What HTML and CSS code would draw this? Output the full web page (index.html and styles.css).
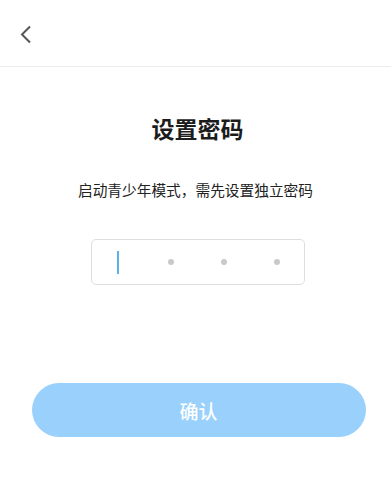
FILE: index.html
```html
<!DOCTYPE html>
<html lang="zh-CN">
<head>
<meta charset="utf-8">
<link rel="stylesheet" href="styles.css">
</head>
<body>
<div class="page">
  <header class="topbar">
    <svg class="back" width="14" height="19" viewBox="0 0 14 19"><path d="M11 1.5 L3 9.5 L11 17.5" fill="none" stroke="#555" stroke-width="2"/></svg>
  </header>
  <main class="content">
    <h1 class="title">设置密码</h1>
    <p class="subtitle">启动青少年模式，需先设置独立密码</p>
    <div class="code">
      <div class="slot"><span class="cursor"></span></div>
      <div class="slot"><span class="dot"></span></div>
      <div class="slot"><span class="dot"></span></div>
      <div class="slot"><span class="dot"></span></div>
    </div>
    <button class="confirm">确认</button>
  </main>
</div>
</body>
</html>
```
FILE: styles.css
```css
* { box-sizing: border-box; }
html, body { margin: 0; padding: 0; background: #fff; }
body { font-family: "Noto Sans CJK SC", "Noto Sans", sans-serif; color: #1a1a1a; }
.page { width: 391px; height: 493px; }
.topbar {
  height: 67px;
  border-bottom: 1px solid #ececec;
  display: flex;
  align-items: flex-start;
  padding: 25px 0 0 19px;
}
.back { display: block; }
.content {
  display: flex;
  flex-direction: column;
  align-items: center;
}
.title {
  margin: 44px 0 0 4px;
  font-size: 23px;
  line-height: 34px;
  font-weight: 700;
  color: #1c1c1c;
}
.subtitle {
  margin: 35px 0 0 0;
  font-size: 14.7px;
  line-height: 20px;
  color: #222;
}
.code {
  margin: 39px 0 0 4px;
  width: 214px;
  height: 46px;
  border: 1px solid #dedede;
  border-radius: 5px;
  display: grid;
  grid-template-columns: repeat(4, 1fr);
  align-items: center;
}
.slot { display: flex; justify-content: center; align-items: center; }
.cursor { width: 2px; height: 23px; background: #5cb1ea; }
.dot { width: 6px; height: 6px; border-radius: 50%; background: #c9c9c9; }
.confirm {
  margin: 98px 0 0 6px;
  width: 334px;
  height: 54px;
  border: none;
  border-radius: 27px;
  background: #99d1fc;
  color: #fff;
  font-family: "Noto Sans CJK SC", sans-serif;
  font-size: 19px;
  font-weight: 500;
  padding: 0;
}
```
